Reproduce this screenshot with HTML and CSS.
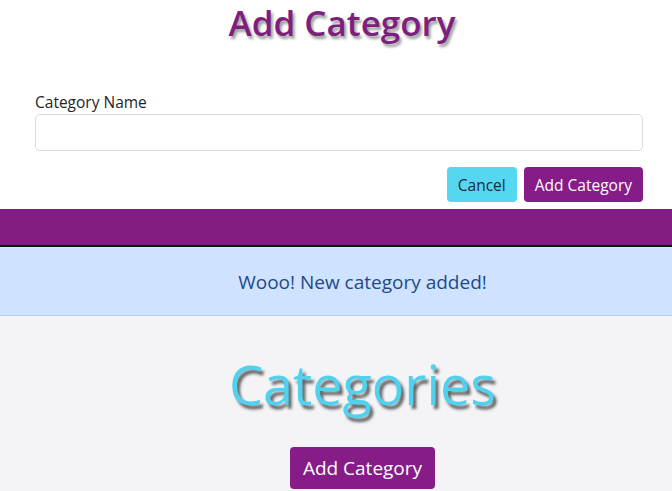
FILE: index.html
```html
<!DOCTYPE html>
<html lang="en">
<head>
<meta charset="utf-8">
<title>Add Category</title>
<link rel="stylesheet" href="styles.css">
</head>
<body>
<section class="form-section">
  <h1 class="form-title">Add Category</h1>
  <form class="category-form">
    <label class="field-label" for="name">Category Name</label>
    <input class="field-input" id="name" type="text">
    <div class="actions">
      <button type="button" class="btn btn-cancel">Cancel</button>
      <button type="button" class="btn btn-primary">Add Category</button>
    </div>
  </form>
</section>
<div class="band"></div>
<div class="alert">Wooo! New category added!</div>
<section class="list-section">
  <h2 class="list-title">Categories</h2>
  <button type="button" class="btn btn-primary btn-lg">Add Category</button>
</section>
</body>
</html>
```
FILE: styles.css
```css
* { box-sizing: border-box; }
html, body { margin: 0; padding: 0; }
body {
  font-family: "Open Sans", "Noto Sans", sans-serif;
  background: #f4f4f7;
  color: #212529;
  height: 491px;
  overflow: hidden;
}
.form-section {
  background: #fff;
  padding: 0 29px 7px 35px;
}
.form-title {
  margin: 0;
  height: 50px;
  text-align: center;
  font-size: 35px;
  line-height: 46px;
  font-weight: 600;
  color: #7e1f80;
  text-shadow: 2px 3px 3px rgba(0,0,0,0.4);
  padding-left: 6px;
}
.category-form {
  display: flex;
  flex-direction: column;
  padding-top: 41px;
}
.field-label {
  font-size: 15.5px;
  line-height: 22px;
  margin-bottom: 1px;
}
.field-input {
  height: 37px;
  border: 1px solid #dadada;
  border-radius: 5px;
  width: 100%;
}
.actions {
  display: flex;
  justify-content: flex-end;
  gap: 7px;
  margin-top: 16px;
}
.btn {
  font-family: inherit;
  border: none;
  border-radius: 4px;
  font-size: 15.5px;
  height: 35px;
  padding: 0 11px;
  cursor: pointer;
}
.btn-cancel {
  background: #55d7f1;
  color: #1b2a35;
}
.btn-primary {
  background: #861c88;
  color: #fff;
}
.band {
  height: 38px;
  background: #821c81;
  border-bottom: 2px solid #111;
}
.alert {
  height: 69px;
  padding-left: 53px;
  background: #cfe2ff;
  border-top: 1px solid #dde9fb;
  border-bottom: 1px solid #b6d0f5;
  color: #1f4a85;
  font-size: 19px;
  display: flex;
  align-items: center;
  justify-content: center;
}
.list-section {
  display: flex;
  flex-direction: column;
  align-items: center;
  padding-top: 38px;
  padding-left: 53px;
}
.list-title {
  margin: 0;
  font-size: 54px;
  line-height: 60px;
  font-weight: 500;
  color: #50d2ee;
  text-shadow: 3px 4px 3px rgba(0,0,0,0.6);
}
.btn-lg {
  margin-top: 33px;
  height: 42px;
  font-size: 19px;
  padding: 0 13px;
}
```
